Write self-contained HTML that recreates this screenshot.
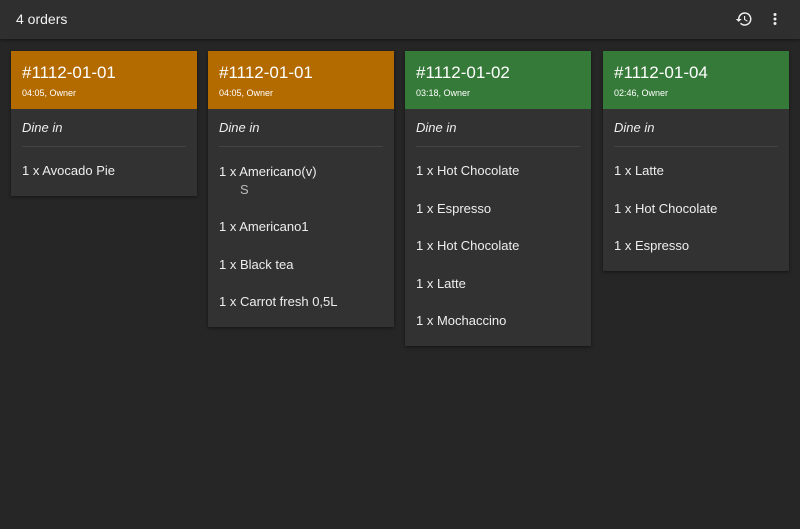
<!DOCTYPE html><html><head><style>
body{margin:0;width:800px;height:529px;background:#262626;font-family:"Liberation Sans",sans-serif;color:#eee;overflow:hidden;position:relative}
.top{height:39px;background:#2f2f2f;box-shadow:0 1px 3px rgba(0,0,0,.5);position:relative}
.top span{position:absolute;left:16px;top:11px;font-size:14px;color:#f2f2f2}
.card{position:absolute;top:51px;width:186px;background:#323232;box-shadow:0 1px 3px rgba(0,0,0,.5);padding-bottom:6px}
.h{height:58px;position:relative}
.h .n{position:absolute;left:11px;top:12px;font-size:17px;color:#fff}
.h .s{position:absolute;left:11px;top:37px;font-size:9px;color:#fff}
.o{background:#b36b00}.g{background:#357a38}
.d{height:37px;line-height:37px;padding-left:0;font-style:italic;font-size:13px;border-bottom:1px solid #444;margin:0 11px 5px 11px}
.i{height:37.5px;line-height:38.5px;padding-left:11px;font-size:13px}
.m{height:56px;padding-left:11px;font-size:13px;line-height:1}
.m div{padding-top:13px}.m p{margin:5px 0 0 21px;color:#bbb}
</style></head><body>
<div class="top"><span>4 orders</span>
<svg style="position:absolute;left:735px;top:10px" width="18" height="18" viewBox="0 0 24 24"><path fill="#eee" d="M13 3a9 9 0 0 0-9 9H1l3.9 3.9L9 12H6a7 7 0 1 1 2.05 4.95l-1.42 1.42A9 9 0 1 0 13 3zm-1 5v5l4.28 2.54.72-1.21-3.5-2.08V8H12z"/></svg>
<svg style="position:absolute;left:766px;top:10px" width="18" height="18" viewBox="0 0 24 24"><path fill="#eee" d="M12 8a2 2 0 1 0 0-4 2 2 0 0 0 0 4zm0 2a2 2 0 1 0 0 4 2 2 0 0 0 0-4zm0 6a2 2 0 1 0 0 4 2 2 0 0 0 0-4z"/></svg>
</div>
<div class="card" style="left:11px"><div class="h o"><div class="n">#1112-01-01</div><div class="s">04:05, Owner</div></div><div class="d">Dine in</div><div class="i">1 x Avocado Pie</div></div>
<div class="card" style="left:208px"><div class="h o"><div class="n">#1112-01-01</div><div class="s">04:05, Owner</div></div><div class="d">Dine in</div><div class="m"><div>1 x Americano(v)</div><p>S</p></div><div class="i">1 x Americano1</div><div class="i">1 x Black tea</div><div class="i">1 x Carrot fresh 0,5L</div></div>
<div class="card" style="left:405px"><div class="h g"><div class="n">#1112-01-02</div><div class="s">03:18, Owner</div></div><div class="d">Dine in</div><div class="i">1 x Hot Chocolate</div><div class="i">1 x Espresso</div><div class="i">1 x Hot Chocolate</div><div class="i">1 x Latte</div><div class="i">1 x Mochaccino</div></div>
<div class="card" style="left:603px"><div class="h g"><div class="n">#1112-01-04</div><div class="s">02:46, Owner</div></div><div class="d">Dine in</div><div class="i">1 x Latte</div><div class="i">1 x Hot Chocolate</div><div class="i">1 x Espresso</div></div>
</body></html>
